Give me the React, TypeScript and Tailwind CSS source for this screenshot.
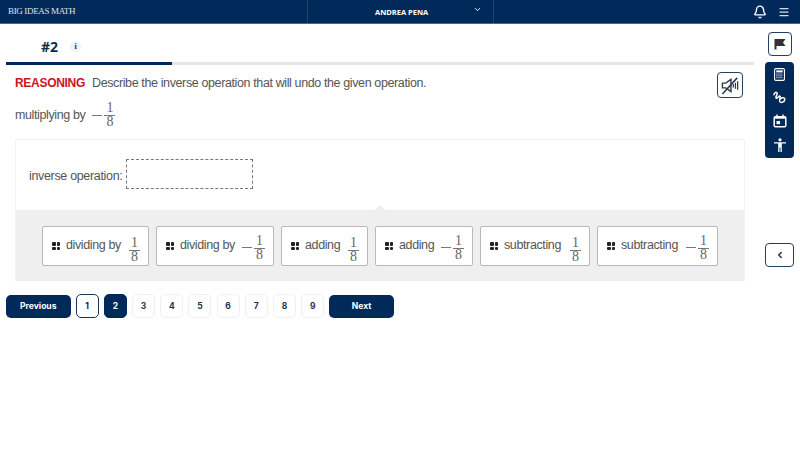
import { Bell, ChevronDown, ChevronLeft, Menu } from "lucide-react";

const NAVY = "bg-[#012a5a]";

function Fraction({ negative }: { negative?: boolean }) {
  return (
    <span className="inline-flex items-center font-['Liberation_Serif',serif] text-[#666]">
      {negative && <span className="mr-[2px] h-px w-[10px] bg-[#777]" />}
      <span className="flex w-[11px] flex-col items-center text-[14px] leading-[12px]">
        <span className="w-full border-b border-[#777] pb-[1px] text-center">1</span>
        <span>8</span>
      </span>
    </span>
  );
}

function Grip() {
  return (
    <span className="grid w-[8px] shrink-0 grid-cols-2 gap-[1px]">
      <span className="size-[3.500px] rounded-[1px] bg-[#222]" />
      <span className="size-[3.500px] rounded-[1px] bg-[#222]" />
      <span className="size-[3.500px] rounded-[1px] bg-[#222]" />
      <span className="size-[3.500px] rounded-[1px] bg-[#222]" />
    </span>
  );
}

function Chip({ label, negative, width }: { label: string; negative?: boolean; width: string }) {
  return (
    <div className={`flex h-[40px] items-center rounded-[2px] border border-[#b8b8b8] bg-white pr-[8px] pl-[9px] ${width}`}>
      <Grip />
      <span className="ml-[6px] pb-[2px] text-[12.500px] tracking-[-0.38px] whitespace-nowrap text-[#555]">{label}</span>
      <span className="ml-auto">
        <Fraction negative={negative} />
      </span>
    </div>
  );
}

function PageButton({ n }: { n: number }) {
  const style =
    n === 1
      ? "border-[1.500px] border-[#1d3350] bg-white text-[#012a5a]"
      : n === 2
        ? "border border-[#012a5a] bg-[#012a5a] text-white"
        : "border border-[#f0f0f0] bg-white text-[#1d3350]";
  return (
    <button className={`flex h-[24px] w-[23px] items-center justify-center rounded-[5px] text-[8.500px] font-bold ${style}`}>
      {n}
    </button>
  );
}

function NavButton({ label }: { label: string }) {
  return (
    <button className={`flex h-[23px] w-[64.500px] items-center justify-center rounded-[5px] text-[8.500px] font-bold text-white ${NAVY}`}>
      {label}
    </button>
  );
}

function MutedSpeaker() {
  return (
    <svg viewBox="0 0 20 20" className="size-[19px]" fill="none" stroke="#2f3b47" strokeWidth="1.500">
      <path d="M1.500 7.500h3.500l5.500-4v13l-5.500-4H1.500z" />
      <path d="M13 8.500v3.500M15.200 7v6.500M17.500 5.500v9" strokeWidth="1.300" />
      <path d="M1.500 19L17 2" strokeWidth="1.700" />
    </svg>
  );
}

function CalculatorIcon() {
  return (
    <svg viewBox="0 0 12 14" className="h-[13px] w-[11px]" fill="none">
      <rect x="0.600" y="0.600" width="10.800" height="12.800" rx="1.500" stroke="white" strokeWidth="1.200" />
      <rect x="2.500" y="2.500" width="7" height="2.200" fill="white" />
      <path d="M2.500 6.500h7M2.500 8.500h7M2.500 10.500h7" stroke="white" strokeWidth="1" strokeDasharray="1.400 0.800" />
    </svg>
  );
}

function ScribbleIcon() {
  return (
    <svg viewBox="0 0 14 14" className="size-[13px]" fill="none" stroke="white" strokeWidth="1.600" strokeLinecap="round">
      <path d="M1 4C1.500 1.500 4 .8 4.500 2.300 5 4 2.600 5.500 3.200 7.500c.6 1.600 3-2.200 4.300-2 1.300.3-1.500 4-.2 6 1.200 1.700 5.200.3 5.500-2.500.2-2-3-2.500-4.800-.5" />
    </svg>
  );
}

function CalendarIcon() {
  return (
    <svg viewBox="0 0 14 14" className="size-[14px]" fill="none">
      <rect x="1.200" y="2.800" width="11.600" height="10" rx="1.300" stroke="white" strokeWidth="1.500" />
      <rect x="1.200" y="2.500" width="11.600" height="2.200" fill="white" />
      <path d="M4 .5v2.500M10 .5v2.500" stroke="white" strokeWidth="1.400" />
      <rect x="3.500" y="7" width="3.500" height="3.200" fill="white" />
    </svg>
  );
}

function PersonIcon() {
  return (
    <svg viewBox="0 0 14 14" className="size-[14px]" fill="white">
      <circle cx="7" cy="1.800" r="1.600" />
      <path d="M1 4.200h12v1.300H8.800V14H7.500V9.500h-1V14H5.200V5.500H1z" />
    </svg>
  );
}

function FlagIcon() {
  return (
    <svg viewBox="0 0 12 12" className="size-[12px]" fill="#333">
      <path d="M.5 1h11L9 4.500 11.500 8H2.500v3.500h-2z" />
    </svg>
  );
}

export default function App() {
  return (
    <div className="flex h-[450px] w-[800px] flex-col overflow-hidden bg-white font-['Liberation_Sans',sans-serif]">
      <header className={`flex h-[24px] shrink-0 items-stretch border-b border-[#4a6585] text-white ${NAVY}`}>
        <div className="flex w-[307px] items-center pt-[1px] pl-[8px] font-['Liberation_Serif',serif] text-[9px] tracking-[-0.35px] text-[#dfe5ec]">
          BIG IDEAS MATH
        </div>
        <div className="flex w-[187px] items-center border-x border-[#1f4470] pl-[67px] font-['Open_Sans',sans-serif] text-[7.500px] font-bold">
          <span className="pt-[2px]">ANDREA PENA</span>
          <ChevronDown className="mb-[5px] ml-[45px] size-[9px]" strokeWidth={2.500} />
        </div>
        <div className="flex flex-1 items-center justify-end gap-[11px] pr-[10px]">
          <Bell className="size-[14px]" strokeWidth={2.400} />
          <Menu className="size-[12px] text-[#d5dce5]" strokeWidth={2.500} />
        </div>
      </header>

      <div className="flex flex-1">
        <main className="w-[765px] shrink-0 pl-[6px]">
          <div className="flex h-[38px] items-center gap-[12px] pt-[7px] pl-[35px]">
            <span className="font-['Open_Sans',sans-serif] text-[14px] font-bold text-[#0f2c4e]">#2</span>
            <span className="flex size-[11px] items-center justify-center rounded-full bg-[#eef1f5] font-['Liberation_Serif',serif] text-[8px] font-bold text-[#0f2c4e]">
              i
            </span>
          </div>
          <div className="flex h-[3px] w-[748px] bg-[#e6e6e6]">
            <div className={`w-[166px] ${NAVY}`} />
          </div>

          <div className="w-[739px] pl-[9px]">
            <div className="flex items-start justify-between pt-[7px]">
              <p className="pt-[2px] text-[12.500px] leading-[18px] tracking-[-0.38px] text-[#555]">
                <span className="mr-[7px] text-[12px] font-bold tracking-[-0.3px] text-[#c8161d]">REASONING</span>
                Describe the inverse operation that will undo the given operation.
              </p>
              <button className="mr-[2px] flex size-[26px] items-center justify-center rounded-[4px] border-[1.500px] border-[#23405f]">
                <MutedSpeaker />
              </button>
            </div>

            <div className="flex h-[33px] items-center pt-[1px] text-[12.500px] tracking-[-0.38px] text-[#555]">
              <span className="mr-[7px]">multiplying by</span>
              <Fraction negative />
            </div>

            <div className="relative mt-[8px] w-[730px] border-x border-t border-[#f3f3f3]">
              <div className="flex h-[70px] items-start pt-[19px] pl-[13px] text-[12.500px] tracking-[-0.33px] text-[#555]">
                <span className="pt-[8px]">inverse operation:</span>
                <div className="ml-[4px] h-[30px] w-[127px] rounded-[1px] border border-dashed border-[#777]" />
              </div>
              <div className="absolute top-[65px] left-[358px] size-0 border-x-[6px] border-b-[5px] border-x-transparent border-b-[#efefef]" />
              <div className="flex h-[71px] gap-[7px] bg-[#efefef] pt-[16px] pl-[26px]">
                <Chip label="dividing by" width="w-[107px]" />
                <Chip label="dividing by" negative width="w-[118px]" />
                <Chip label="adding" width="w-[87px]" />
                <Chip label="adding" negative width="w-[98px]" />
                <Chip label="subtracting" width="w-[110px]" />
                <Chip label="subtracting" negative width="w-[121px]" />
              </div>
            </div>
          </div>

          <nav className="mt-[13px] flex items-center gap-[5.200px] font-['Inter',sans-serif]">
            <NavButton label="Previous" />
            {[1, 2, 3, 4, 5, 6, 7, 8, 9].map((n) => (
              <PageButton key={n} n={n} />
            ))}
            <NavButton label="Next" />
          </nav>
        </main>

        <aside className="flex w-[35px] flex-col items-center pt-[8px] pr-[6px]">
          <button className="flex size-[24px] items-center justify-center rounded-[4px] border-[1.500px] border-[#23405f]">
            <FlagIcon />
          </button>
          <div className={`mt-[6px] flex h-[96px] w-[29px] flex-col items-center justify-between rounded-[4px] pt-[6px] pb-[6px] text-white ${NAVY}`}>
            <CalculatorIcon />
            <ScribbleIcon />
            <CalendarIcon />
            <PersonIcon />
          </div>
          <button className="mt-[85px] flex h-[24px] w-[29px] items-center justify-center rounded-[4px] border-[1.500px] border-[#23405f]">
            <ChevronLeft className="size-[10px] text-[#1d3350]" strokeWidth={3.500} />
          </button>
        </aside>
      </div>
    </div>
  );
}
